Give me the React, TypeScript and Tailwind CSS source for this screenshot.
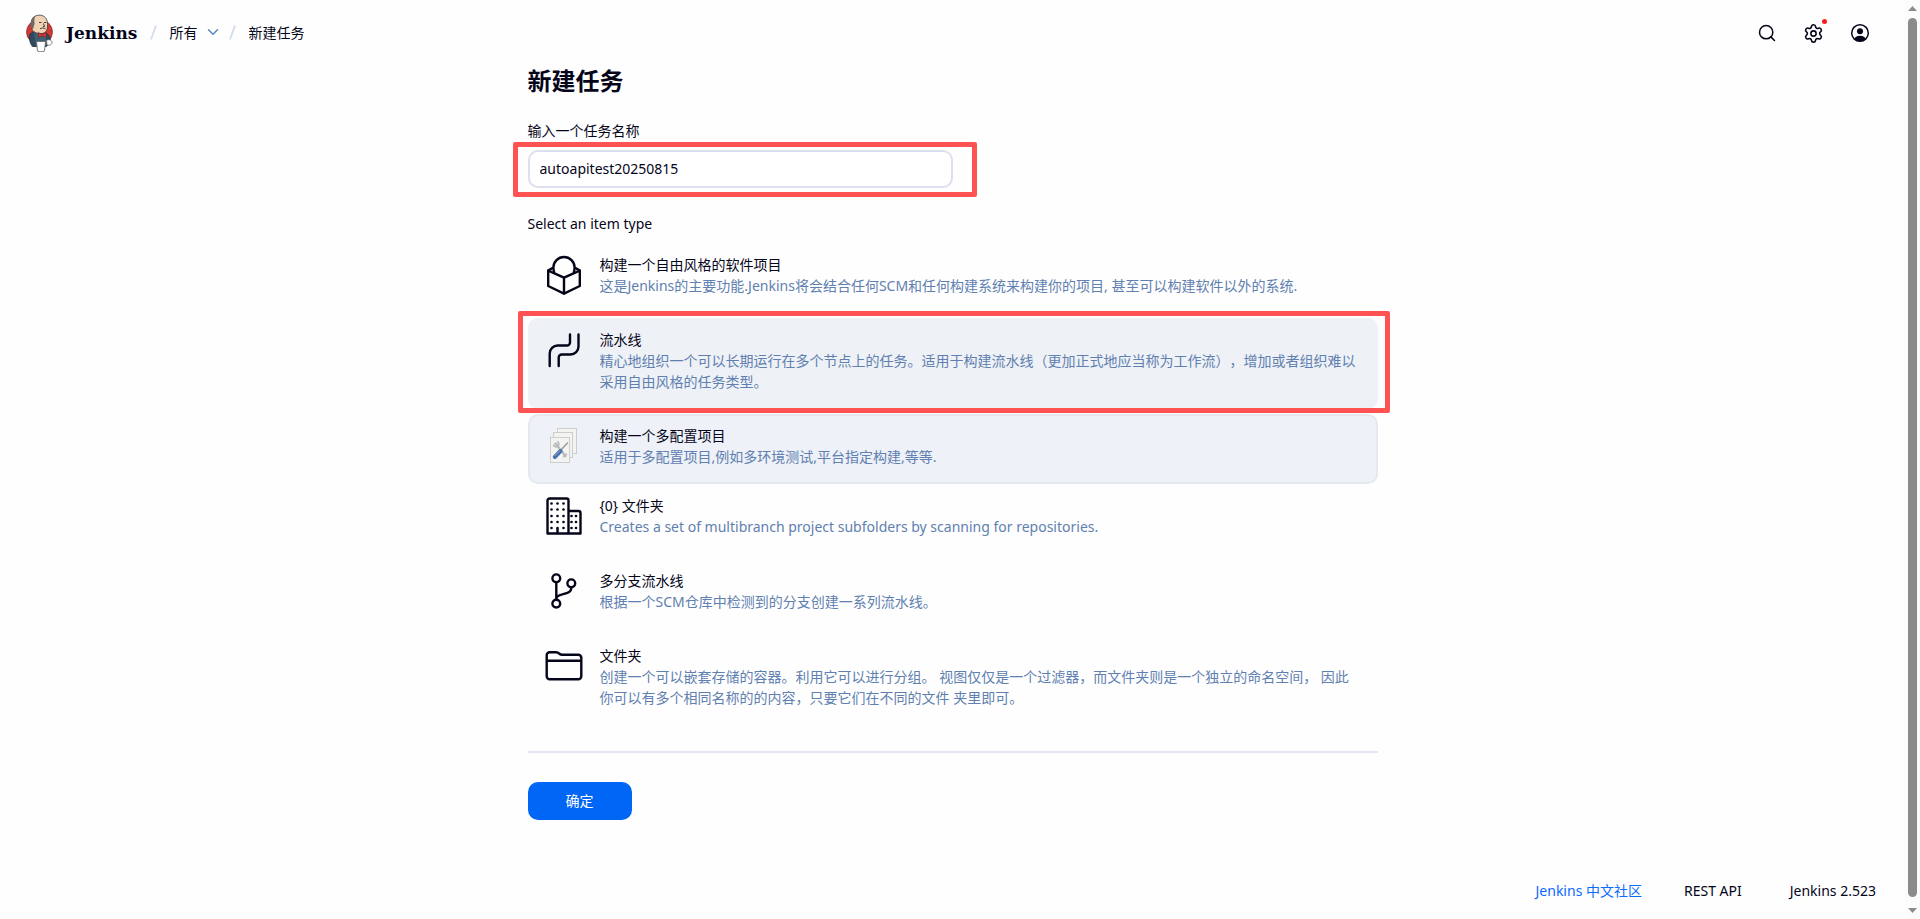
import { useState } from 'react';
import type { ReactNode } from 'react';
import { ChevronDown, Search, Settings } from 'lucide-react';

type ItemType = {
  id: string;
  title: string;
  description: string;
  icon: ReactNode;
  highlighted?: boolean;
};

const LineIcon = ({ children }: { children: ReactNode }) => (
  <svg
    className="w-10 h-10"
    viewBox="0 0 40 40"
    fill="none"
    stroke="currentColor"
    strokeWidth={2.4}
    strokeLinecap="round"
    strokeLinejoin="round"
  >
    {children}
  </svg>
);

const FreestyleIcon = () => (
  <LineIcon>
    <path d="M8.5 13L4.2 15.6V31L20 38.6L35.8 31V15.6L31.5 13" />
    <path d="M4.2 15.6L20 22.6L35.8 15.6M20 22.6V38.6" />
    <path d="M10.2 17.2C9.6 15.8 9.4 14.2 9.4 12.6a10.6 10.6 0 0 1 21.2 0c0 1.6-.2 3.2-.8 4.6" />
  </LineIcon>
);

const PipelineIcon = () => (
  <LineIcon>
    <path d="M5.7 36V23.5a8 8 0 0 1 8-8h9.3a3 3 0 0 0 3-3V4.5" />
    <path d="M14.7 36V27.5a3 3 0 0 1 3-3h8.8a8 8 0 0 0 8-8V4.5" />
  </LineIcon>
);

const MatrixIcon = () => (
  <svg className="w-10 h-10" viewBox="0 0 40 40">
    <g fill="#f3f3f1" stroke="#cdcdca" strokeWidth={1}>
      <rect x="13.5" y="2.5" width="19" height="25" />
      <rect x="9.5" y="6.5" width="19" height="25" />
      <rect x="6.5" y="11.5" width="19" height="25" />
    </g>
    <path d="M11.5 17.5L21.5 30" stroke="#b9bdc0" strokeWidth={2.4} strokeLinecap="round" />
    <path d="M9.5 18.5c.5 2.5 3 3 4.5 1.5s.8-3.6-.8-4.4" fill="none" stroke="#b9bdc0" strokeWidth={1.8} />
    <path d="M19.8 31.6c-.6-2 1-3.7 3.2-3" fill="none" stroke="#b9bdc0" strokeWidth={1.8} />
    <path d="M23.5 17L16.5 24.5" stroke="#9aa0a6" strokeWidth={1.6} strokeLinecap="round" />
    <path d="M16.5 25L10.8 31" stroke="#4a72ad" strokeWidth={4} strokeLinecap="round" />
    <path d="M15.5 25L11 29.6" stroke="#8fb0dc" strokeWidth={1} strokeLinecap="round" />
  </svg>
);

const windows = [
  ...[7.5, 13.5, 20, 26, 32].flatMap((y) => [7.5, 13.5, 19.5].map((x) => [x, y])),
  ...[20, 26, 32].flatMap((y) => [27.5, 32].map((x) => [x, y])),
];

const BuildingIcon = () => (
  <LineIcon>
    <path d="M3.5 37.5V4.5a2 2 0 0 1 2-2h17a2 2 0 0 1 2 2V37.5M24.5 15h10a2 2 0 0 1 2 2V37.5H3.5M13.5 33V37" />
    {windows.map(([x, y]) => (
      <circle key={`${x}-${y}`} cx={x} cy={y} r={1.3} fill="currentColor" stroke="none" />
    ))}
  </LineIcon>
);

const BranchIcon = () => (
  <LineIcon>
    <circle cx="12.3" cy="7.3" r="3.9" />
    <circle cx="27.3" cy="12.3" r="3.9" />
    <circle cx="12.3" cy="32.6" r="3.9" />
    <path d="M12.3 11.5V28.5M27.3 16.5c0 9-14 4.5-15 11" />
  </LineIcon>
);

const FolderIcon = () => (
  <LineIcon>
    <path d="M2.7 30.3V9.3a3 3 0 0 1 3-3h6.5c3 0 2.8 2.5 6 2.5h16.1a3 3 0 0 1 3 3v18.5a3 3 0 0 1-3 3H5.7a3 3 0 0 1-3-3zM2.7 14.8h34.6" />
  </LineIcon>
);

const itemGroups: ItemType[][] = [
  [
    {
      id: 'freestyle',
      title: '构建一个自由风格的软件项目',
      description:
        '这是Jenkins的主要功能.Jenkins将会结合任何SCM和任何构建系统来构建你的项目, 甚至可以构建软件以外的系统.',
      icon: <FreestyleIcon />,
    },
    {
      id: 'pipeline',
      title: '流水线',
      description:
        '精心地组织一个可以长期运行在多个节点上的任务。适用于构建流水线（更加正式地应当称为工作流），增加或者组织难以采用自由风格的任务类型。',
      icon: <PipelineIcon />,
      highlighted: true,
    },
    {
      id: 'matrix',
      title: '构建一个多配置项目',
      description: '适用于多配置项目,例如多环境测试,平台指定构建,等等.',
      icon: <MatrixIcon />,
    },
  ],
  [
    {
      id: 'organization',
      title: '{0} 文件夹',
      description: 'Creates a set of multibranch project subfolders by scanning for repositories.',
      icon: <BuildingIcon />,
    },
    {
      id: 'multibranch',
      title: '多分支流水线',
      description: '根据一个SCM仓库中检测到的分支创建一系列流水线。',
      icon: <BranchIcon />,
    },
    {
      id: 'folder',
      title: '文件夹',
      description:
        '创建一个可以嵌套存储的容器。利用它可以进行分组。 视图仅仅是一个过滤器，而文件夹则是一个独立的命名空间， 因此你可以有多个相同名称的的内容，只要它们在不同的文件 夹里即可。',
      icon: <FolderIcon />,
    },
  ],
];

const JenkinsLogo = () => (
  <svg className="w-[27px] h-[38px]" viewBox="0 0 27 38">
    <ellipse cx="13.5" cy="18" rx="13" ry="12.5" fill="#d33833" stroke="#5a2320" strokeWidth={0.6} />
    <path d="M4 20c-1 4-.5 9 2.5 12.5h14l3.5-4c1-4-.5-8-4.5-9.5l-5-1-6-1z" fill="#2f4a5c" stroke="#22313c" strokeWidth={0.8} />
    <path d="M6 15.5C4.500 10 5 4.500 9 2.200c4.500-2.300 9.500-.8 11.500 3 1.400 3.200 1.300 7.300.5 10.300-1 3-3.500 4.300-6.500 4C11 19.500 7.500 18.500 6 15.500z" fill="#efd3b4" stroke="#3a3a3a" strokeWidth={0.8} />
    <path d="M5.2 14C4 8 5 3.5 9.5 1.8 8.2 4.5 8.2 7 8.6 9.5L7 15.5z" fill="#6f6a66" />
    <path d="M13 8.5h2.5M18 8.5h2.2M14 14.8c1.5-1 4-1 5.5 0M17.5 9.5l1 3H17" fill="none" stroke="#4a3a32" strokeWidth={1} />
    <path d="M8 17.5l6 3.5 6-2v13H10z" fill="#3d6075" />
    <path d="M12.5 18.5l3.5 2 4-2.2v5l-4-1.5-3.5 1.7z" fill="#d33833" stroke="#7a1a18" strokeWidth={0.5} />
    <path d="M10.5 27.5h9l-1 9.5c-2 1-5 1-7 0z" fill="#fff" stroke="#6b6b6b" strokeWidth={0.9} />
    <path d="M20.5 26.5c2-1.5 5-.8 5.5 1.5s-2 3.8-5 3z" fill="#fff" stroke="#6b6b6b" strokeWidth={0.8} />
  </svg>
);

const UserIcon = () => (
  <svg className="w-5 h-5" viewBox="0 0 20 20">
    <clipPath id="user-clip">
      <circle cx="10" cy="10" r="8.5" />
    </clipPath>
    <g clipPath="url(#user-clip)" fill="currentColor">
      <circle cx="10" cy="8.2" r="3" />
      <ellipse cx="10" cy="17.5" rx="6" ry="4.8" />
    </g>
    <circle cx="10" cy="10" r="8.3" fill="none" stroke="currentColor" strokeWidth={1.5} />
  </svg>
);

const Slash = () => (
  <svg className="w-[7px] h-[15px]" viewBox="0 0 7 15" fill="none" stroke="#d3dcec" strokeWidth={1.8}>
    <path d="M6 0.5L1 14.5" />
  </svg>
);

const Header = () => (
  <header className="flex items-center justify-between h-[66px] pl-[26px] pr-[35px]">
    <nav className="flex items-center">
      <a href="#home" className="flex items-center gap-[13px]">
        <JenkinsLogo />
        <span className="font-['DejaVu_Serif',serif] text-[17px] font-bold">Jenkins</span>
      </a>
      <div className="flex items-center pl-[13px] pb-0.5 gap-3">
        <Slash />
        <a href="#all">所有</a>
        <button type="button" aria-label="展开" className="-mx-[5px] text-[#5c88c0]">
          <ChevronDown size={18} strokeWidth={2} />
        </button>
        <Slash />
        <a href="#new">新建任务</a>
      </div>
    </nav>
    <div className="flex items-center gap-[26px]">
      <button type="button" aria-label="搜索">
        <Search size={20} strokeWidth={1.8} />
      </button>
      <button type="button" aria-label="设置" className="relative">
        <Settings size={21} strokeWidth={1.8} />
        <span className="absolute -top-1 -right-[3px] w-[5px] h-[5px] rounded-full bg-[#fb1d1d]" />
      </button>
      <button type="button" aria-label="用户">
        <UserIcon />
      </button>
    </div>
  </header>
);

const Scrollbar = () => (
  <div className="flex flex-col items-center justify-between gap-[7px] w-[15px] py-[6px] bg-[#fcfcfc]" aria-hidden="true">
    <svg className="w-[9px] h-[5px]" viewBox="0 0 9 5" fill="#8b8b8b">
      <path d="M0 5L4.5 0L9 5z" />
    </svg>
    <div className="flex-1 w-[9px] mb-1 rounded-full bg-[#8b8b8b]" />
    <svg className="w-[9px] h-[5px]" viewBox="0 0 9 5" fill="#8b8b8b">
      <path d="M0 0L4.5 5L9 0z" />
    </svg>
  </div>
);

const App = () => {
  const [name, setName] = useState('autoapitest20250815');
  const [selected, setSelected] = useState('matrix');

  return (
    <div className="flex min-h-screen bg-[#fefefe] text-[#05051a] text-sm leading-[21px] font-['Noto_Sans','Noto_Sans_CJK_SC',sans-serif] [text-spacing-trim:space-all]">
      <div className="flex flex-col flex-1">
        <Header />
        <main className="flex-1 w-full max-w-[850px] mx-auto">
          <h1 className="text-2xl leading-[30px] font-bold">新建任务</h1>
          <form onSubmit={(e) => e.preventDefault()}>
            <label htmlFor="name" className="block mt-6">
              输入一个任务名称
            </label>
            <div className="relative w-1/2 mt-[9px]">
              <input
                id="name"
                type="text"
                value={name}
                onChange={(e) => setName(e.target.value)}
                className="block w-full h-[38px] px-[10px] pb-0.5 bg-white border-2 border-[#dce0ee] rounded-[10px] outline-none"
              />
              <div className="absolute -top-2 -bottom-[9px] -left-[15px] -right-6 border-5 border-[#ff5252] rounded-xs pointer-events-none" />
            </div>

            <fieldset>
              <legend className="pt-[25px]">Select an item type</legend>
              <div className="mt-[9px]">
                {itemGroups.map((group) => (
                  <div key={group[0].id} className="flex flex-col gap-[5px]">
                    {group.map((item) => (
                      <label
                        key={item.id}
                        className={`relative flex gap-4 pt-[9px] pb-[15px] pl-[14px] pr-[18px] border-2 rounded-[10px] cursor-pointer ${
                          selected === item.id
                            ? 'bg-[#eef1f7] border-[#e5e8ee]'
                            : item.highlighted
                              ? 'bg-[#eef1f6] border-[#eef1f6]'
                              : 'border-transparent'
                        }`}
                      >
                        <input
                          type="radio"
                          name="mode"
                          value={item.id}
                          checked={selected === item.id}
                          onChange={() => setSelected(item.id)}
                          className="sr-only"
                        />
                        <span className="flex-none h-10 mt-px">{item.icon}</span>
                        <span className="flex-1">
                          <span className="block">{item.title}</span>
                          <span className="block text-[#5f80b0]">{item.description}</span>
                        </span>
                        {item.highlighted && (
                          <span className="absolute -top-[9px] -bottom-[6px] -left-3 -right-[14px] border-5 border-[#ff5252] rounded-xs pointer-events-none" />
                        )}
                      </label>
                    ))}
                  </div>
                ))}
              </div>
            </fieldset>

            <hr className="mt-[26px] border-t-2 border-[#e3e7f2]" />
            <button type="submit" className="w-[104px] h-[38px] mt-[29px] pb-0.5 rounded-[10px] bg-[#0066f5] text-white">
              确定
            </button>
          </form>
        </main>
        <footer className="flex justify-end gap-[42px] pb-[18px] pr-[29px]">
          <a href="#community" className="text-[#0b6aff]">
            Jenkins 中文社区
          </a>
          <a href="#api">REST API</a>
          <button type="button" className="pl-1.5">
            Jenkins 2.523
          </button>
        </footer>
      </div>
      <Scrollbar />
    </div>
  );
};

export default App;
